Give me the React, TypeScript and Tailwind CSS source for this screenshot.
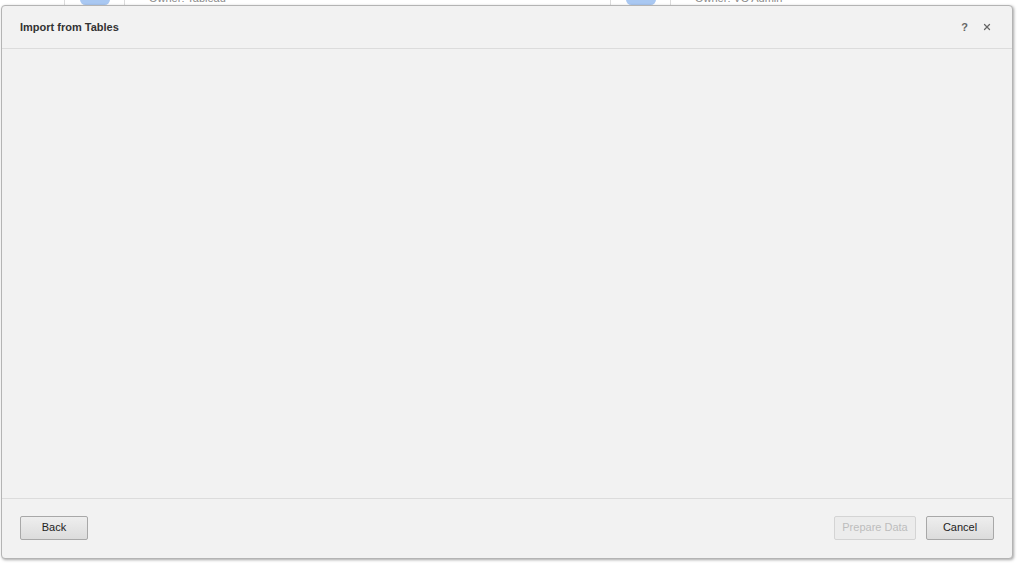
import { X } from 'lucide-react';

function PeekCard({ name }: { name: string }) {
    return (
        <div className="flex h-[8px] w-[546px] shrink-0 items-start">
            <div className="flex h-full w-[61px] justify-center border-x border-[#dcdcdc] bg-white">
                <div className="mt-[-6px] h-[11px] w-[30px] rounded-full bg-[#a9c8f2]" />
            </div>
            <div className="mt-[-8px] pl-[24px] text-[11px] leading-[12px] text-[#8a8a8a]">{name}</div>
        </div>
    );
}

export default function App() {
    return (
        <div className="relative h-[568px] w-[1020px] overflow-hidden bg-white font-['Liberation_Sans',Arial,sans-serif]">
            <div className="flex h-[6px] pl-[64px]">
                <PeekCard name="Owner: Tableau" />
                <PeekCard name="Owner: VC Admin" />
            </div>

            <div className="absolute left-[1px] top-[5px] flex h-[554px] w-[1012px] flex-col rounded-[4px] border border-[#b4b4b4] bg-[#f2f2f2] shadow-[1px_1px_3px_rgba(0,0,0,0.35)]">
                <div className="flex h-[43px] items-center justify-between border-b border-[#dcdcdc] pl-[18px] pr-[20px]">
                    <span className="text-[11px] font-bold text-[#333]">Import from Tables</span>
                    <div className="flex items-center gap-[14px] text-[#666]">
                        <span className="text-[11px] font-bold">?</span>
                        <X size={10} strokeWidth={3} />
                    </div>
                </div>
                <div className="flex-1" />
                <div className="flex h-[60px] items-center justify-between border-t border-[#dcdcdc] pb-[2px] pl-[18px] pr-[18px]">
                    <button className="h-[24px] w-[68px] rounded-[2px] border border-[#a8a8a8] bg-gradient-to-b from-[#eeeeee] to-[#dcdcdc] text-[11px] text-[#222]">
                        Back
                    </button>
                    <div className="flex gap-[10px]">
                        <button className="h-[24px] w-[82px] rounded-[2px] border border-[#d4d4d4] bg-[#ececec] text-[11px] text-[#bdbdbd]">
                            Prepare Data
                        </button>
                        <button className="h-[24px] w-[68px] rounded-[2px] border border-[#a8a8a8] bg-gradient-to-b from-[#eeeeee] to-[#dcdcdc] text-[11px] text-[#222]">
                            Cancel
                        </button>
                    </div>
                </div>
            </div>
        </div>
    );
}
